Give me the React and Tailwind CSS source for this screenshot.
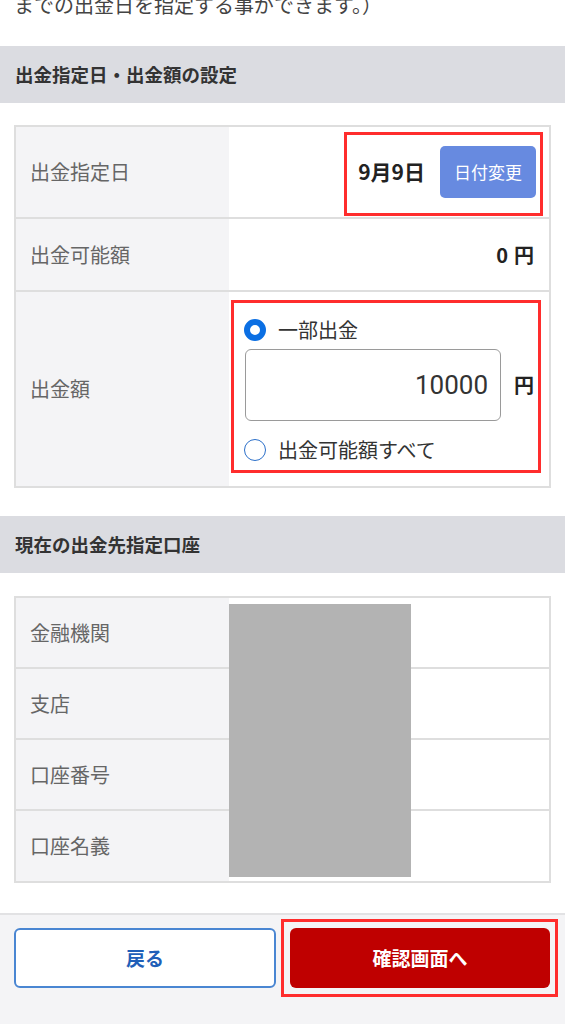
const jp = { fontFamily: '"Noto Sans CJK JP", "Noto Sans", sans-serif' };

function SectionHead({ children, className = "" }) {
  return (
    <div className={`flex h-[57px] items-center bg-[#dbdce1] px-[15px] text-[18.5px] font-bold text-[#333] ${className}`}>
      {children}
    </div>
  );
}

function Row({ label, h, children, last, top }) {
  return (
    <div className={`flex ${last ? "" : "border-b-2 border-[#dedede]"}`} style={{ height: h }}>
      <div className="flex w-[213px] shrink-0 items-center bg-[#f4f4f6] pl-[14px] text-[20px] text-[#666]">{label}</div>
      <div className={`flex flex-1 justify-end bg-white ${top ? "items-start" : "items-center"}`}>{children}</div>
    </div>
  );
}

function Radio({ checked }) {
  return checked ? (
    <span className="box-border block h-[22px] w-[22px] rounded-full border-[6px] border-[#0b6fe3] bg-white" />
  ) : (
    <span className="box-border block h-[22px] w-[22px] rounded-full border-[1.5px] border-[#2b6fc9] bg-white" />
  );
}

export default function App() {
  return (
    <div className="relative w-[565px] overflow-hidden bg-white" style={jp}>
      <p className="mt-[-9px] whitespace-nowrap px-[14px] text-[20px] leading-[28px] text-[#444]">までの出金日を指定する事ができます。）</p>

      <SectionHead className="mt-[27px]">出金指定日・出金額の設定</SectionHead>

      <div className="mx-[14px] mt-[22px] border-2 border-[#dedede]">
        <Row label="出金指定日" h={92}>
          <div className="mr-[6px] mt-[3px] flex h-[84px] w-[199px] items-start justify-end border-[3px] border-[#ff2d2d] pr-[4px] pt-[11px]">
            <span className="flex h-[52px] items-center text-[21px] font-bold text-[#222]">9月9日</span>
            <button className="ml-[15px] h-[52px] w-[96px] rounded-[5px] bg-[#678ae0] text-[17px] text-white">日付変更</button>
          </div>
        </Row>
        <Row label="出金可能額" h={73}>
          <span className="mr-[15px] text-[20px] font-bold text-[#222]">
            0<span className="ml-[6px]">円</span>
          </span>
        </Row>
        <Row label="出金額" h={194} last top>
          <div className="mr-[8px] mt-[8px] flex h-[173px] w-[310px] flex-col border-[3px] border-[#ff2d2d] pl-[10px] pr-[3px]">
            <div className="mt-[12px] flex h-[30px] items-center gap-[12px]">
              <Radio checked />
              <span className="text-[20px] text-[#333]">一部出金</span>
            </div>
            <div className="mt-[4px] flex items-center">
              <div className="ml-[1px] flex h-[72px] w-[256px] items-center justify-end rounded-[6px] border border-[#9a9a9a] pr-[12px] text-[26px] text-[#333]" style={{ fontFamily: "Roboto, sans-serif" }}>
                10000
              </div>
              <span className="ml-[13px] text-[20px] font-bold text-[#222]">円</span>
            </div>
            <div className="mt-[14px] flex h-[30px] items-center gap-[12px]">
              <Radio />
              <span className="text-[20px] text-[#333]">出金可能額すべて</span>
            </div>
          </div>
        </Row>
      </div>

      <SectionHead className="mt-[28px]">現在の出金先指定口座</SectionHead>

      <div className="relative mx-[14px] mt-[23px] border-2 border-[#dedede]">
        <Row label="金融機関" h={71} />
        <Row label="支店" h={71} />
        <Row label="口座番号" h={71} />
        <Row label="口座名義" h={70} last />
        <div className="absolute left-[213px] top-[6px] h-[273px] w-[182px] bg-[#b3b3b3]" />
      </div>

      <div className="mt-[30px] flex h-[112px] items-start border-t-2 border-[#e2e2e4] bg-[#f4f4f6] pl-[14px] pt-[4px]">
        <button className="mt-[9px] h-[60px] w-[262px] shrink-0 rounded-[6px] border-2 border-[#4a86d2] bg-white text-[19px] font-bold text-[#1f5fb8]">
          戻る
        </button>
        <div className="ml-[5px] shrink-0 border-[3px] border-[#ff2d2d] py-[6px] pl-[6px] pr-[5px]">
          <button className="h-[60px] w-[260px] rounded-[6px] bg-[#bf0000] text-[19px] font-bold text-white">確認画面へ</button>
        </div>
      </div>
    </div>
  );
}
